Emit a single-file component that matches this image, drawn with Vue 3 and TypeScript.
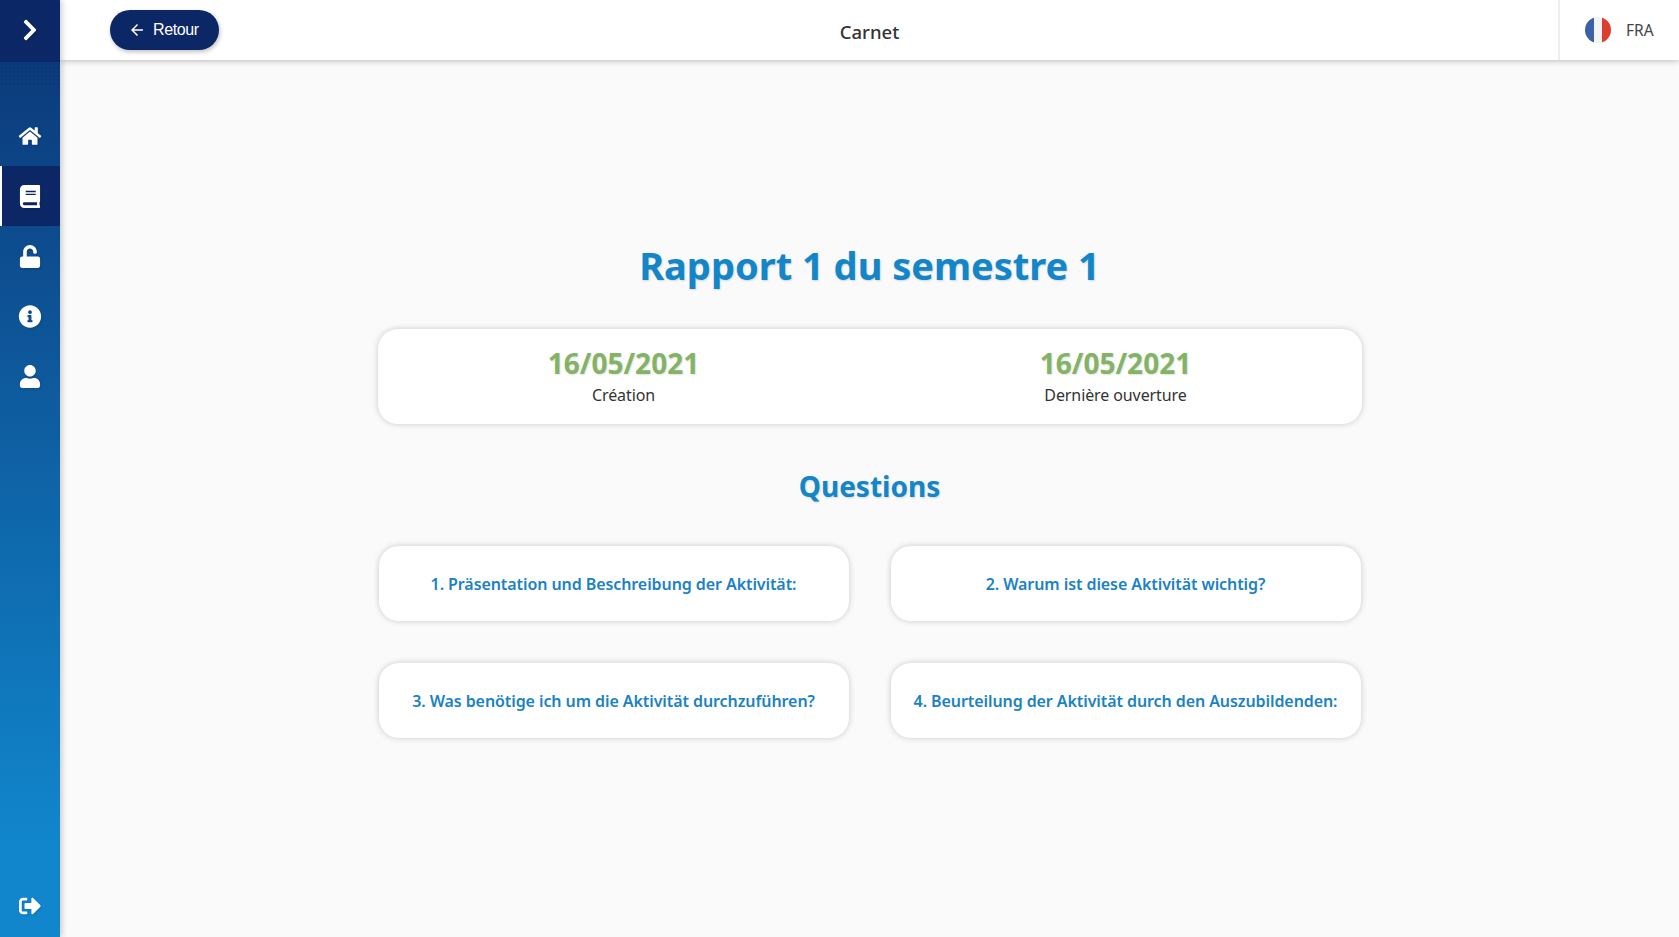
<template>
  <div class="app">
    <aside class="sidebar">
      <div class="toggle">
        <svg class="icon chevron" viewBox="0 0 320 512"><path :d="icons.chevron" /></svg>
      </div>
      <div class="dots"></div>
      <nav class="nav">
        <a v-for="item in navItems" :key="item.name" class="nav-item" :class="{ active: item.active }">
          <svg class="icon" :class="item.name" :viewBox="item.box"><path :d="item.path" /></svg>
        </a>
      </nav>
      <a class="nav-item logout">
        <svg class="icon" viewBox="0 0 512 512"><path :d="icons.logout" /></svg>
      </a>
    </aside>

    <div class="content">
      <header class="topbar">
        <div class="topbar-left">
          <button class="back">
            <svg class="back-arrow" viewBox="0 0 24 24"><path d="M20 11H7.8l5.6-5.6L12 4l-8 8 8 8 1.4-1.4L7.8 13H20z" /></svg>
            Retour
          </button>
        </div>
        <div class="topbar-title">Carnet</div>
        <div class="lang">
          <svg class="flag" viewBox="0 0 26 26">
            <defs><clipPath id="flag-clip"><circle cx="13" cy="13" r="13" /></clipPath></defs>
            <g clip-path="url(#flag-clip)">
              <rect width="9" height="26" fill="#3c5fa8" />
              <rect x="9" width="8" height="26" fill="#f1f3f5" />
              <rect x="17" width="9" height="26" fill="#dc3d2c" />
            </g>
          </svg>
          <span>FRA</span>
        </div>
      </header>

      <main class="main">
        <h1 class="title">Rapport 1 du semestre 1</h1>
        <section class="dates">
          <div v-for="d in dates" :key="d.label" class="date">
            <div class="date-value">{{ d.value }}</div>
            <div class="date-label">{{ d.label }}</div>
          </div>
        </section>
        <h2 class="subtitle">Questions</h2>
        <section class="questions">
          <div v-for="q in questions" :key="q" class="question">{{ q }}</div>
        </section>
      </main>
    </div>
  </div>
</template>

<script setup lang="ts">
const icons = {
  chevron:
    "M285.476 272.971L91.132 467.314c-9.373 9.373-24.569 9.373-33.941 0l-22.667-22.667c-9.357-9.357-9.375-24.522-.04-33.901L188.505 256 34.484 101.255c-9.335-9.379-9.317-24.544.04-33.901l22.667-22.667c9.373-9.373 24.569-9.373 33.941 0L285.475 239.03c9.373 9.372 9.373 24.568.001 33.941z",
  home:
    "M280.37 148.26L96 300.11V464a16 16 0 0 0 16 16l112.06-.29a16 16 0 0 0 15.92-16V368a16 16 0 0 1 16-16h64a16 16 0 0 1 16 16v95.64a16 16 0 0 0 16 16.05L464 480a16 16 0 0 0 16-16V300L295.67 148.26a12.19 12.19 0 0 0-15.3 0zM571.6 251.47L488 182.56V44.05a12 12 0 0 0-12-12h-56a12 12 0 0 0-12 12v72.61L318.47 43a48 48 0 0 0-61 0L4.34 251.47a12 12 0 0 0-1.6 16.9l25.5 31A12 12 0 0 0 45.15 301l235.22-193.74a12.19 12.19 0 0 1 15.3 0L530.9 301a12 12 0 0 0 16.9-1.6l25.5-31a12 12 0 0 0-1.7-16.93z",
  book:
    "M448 360V24c0-13.3-10.7-24-24-24H96C43 0 0 43 0 96v320c0 53 43 96 96 96h328c13.3 0 24-10.7 24-24v-16c0-7.5-3.5-14.3-8.9-18.7-4.2-15.4-4.2-59.3 0-74.7 5.4-4.3 8.9-11.1 8.9-18.6zM128 134c0-3.3 2.7-6 6-6h212c3.3 0 6 2.7 6 6v20c0 3.3-2.7 6-6 6H134c-3.3 0-6-2.7-6-6v-20zm0 64c0-3.3 2.7-6 6-6h212c3.3 0 6 2.7 6 6v20c0 3.3-2.7 6-6 6H134c-3.3 0-6-2.7-6-6v-20zm253.4 250H96c-17.7 0-32-14.3-32-32 0-17.6 14.4-32 32-32h285.4c-1.9 17.1-1.9 46.9 0 64z",
  unlock:
    "M400 256H152V152.9c0-39.6 31.7-72.5 71.3-72.9 40-.4 72.7 32.1 72.7 72v16c0 13.3 10.7 24 24 24h32c13.3 0 24-10.7 24-24v-16C376 68 307.5-.3 223.5 0 139.5.3 72 69.5 72 153.5V256H48c-26.5 0-48 21.5-48 48v160c0 26.5 21.5 48 48 48h352c26.5 0 48-21.5 48-48V304c0-26.5-21.5-48-48-48z",
  info:
    "M256 8C119.043 8 8 119.083 8 256c0 136.997 111.043 248 248 248s248-111.003 248-248C504 119.083 392.957 8 256 8zm0 110c23.196 0 42 18.804 42 42s-18.804 42-42 42-42-18.804-42-42 18.804-42 42-42zm56 254c0 6.627-5.373 12-12 12h-88c-6.627 0-12-5.373-12-12v-24c0-6.627 5.373-12 12-12h12v-64h-12c-6.627 0-12-5.373-12-12v-24c0-6.627 5.373-12 12-12h64c6.627 0 12 5.373 12 12v100h12c6.627 0 12 5.373 12 12v24z",
  user:
    "M224 256c70.7 0 128-57.3 128-128S294.7 0 224 0 96 57.3 96 128s57.3 128 128 128zm89.6 32h-16.7c-22.2 10.2-46.9 16-72.9 16s-50.6-5.8-72.9-16h-16.7C60.2 288 0 348.2 0 422.4V464c0 26.5 21.5 48 48 48h352c26.5 0 48-21.5 48-48v-41.6c0-74.2-60.2-134.4-134.4-134.4z",
  logout:
    "M497 273L329 441c-15 15-41 4.5-41-17v-96H152c-13.3 0-24-10.7-24-24v-96c0-13.3 10.7-24 24-24h136V88c0-21.4 25.9-32 41-17l168 168c9.3 9.4 9.3 24.6 0 34zM192 436v-40c0-6.6-5.4-12-12-12H96c-17.7 0-32-14.3-32-32V160c0-17.7 14.3-32 32-32h84c6.6 0 12-5.4 12-12V76c0-6.6-5.4-12-12-12H96c-53 0-96 43-96 96v192c0 53 43 96 96 96h84c6.6 0 12-5.4 12-12z"
};

const navItems = [
  { name: "home", box: "0 0 576 512", path: icons.home, active: false },
  { name: "book", box: "0 0 448 512", path: icons.book, active: true },
  { name: "unlock", box: "0 0 448 512", path: icons.unlock, active: false },
  { name: "info", box: "0 0 512 512", path: icons.info, active: false },
  { name: "user", box: "0 0 448 512", path: icons.user, active: false }
];

const dates = [
  { value: "16/05/2021", label: "Création" },
  { value: "16/05/2021", label: "Dernière ouverture" }
];

const questions = [
  "1. Präsentation und Beschreibung der Aktivität:",
  "2. Warum ist diese Aktivität wichtig?",
  "3. Was benötige ich um die Aktivität durchzuführen?",
  "4. Beurteilung der Aktivität durch den Auszubildenden:"
];
</script>

<style>
html,
body {
  margin: 0;
  background: #fafafa;
}
</style>

<style scoped>
.app {
  display: flex;
  height: 937px;
  overflow: hidden;
  font-family: "Noto Sans", "Open Sans", sans-serif;
  color: #333;
}

.sidebar {
  position: relative;
  z-index: 2;
  display: flex;
  flex-direction: column;
  flex: 0 0 60px;
  width: 60px;
  background: linear-gradient(180deg, #0b3575 0%, #1186cc 90%, #1186cc 100%);
  box-shadow: 2px 0 6px rgba(0, 0, 0, 0.2);
}

.toggle {
  display: flex;
  align-items: center;
  justify-content: center;
  height: 62px;
  background: #0c2766;
}

.dots {
  height: 24px;
  background-image: radial-gradient(rgba(12, 39, 102, 0.35) 0.7px, transparent 0.9px);
  background-size: 4px 4px;
}

.nav {
  display: flex;
  flex-direction: column;
  padding-top: 20px;
}

.nav-item {
  display: flex;
  align-items: center;
  justify-content: center;
  height: 60px;
}

.nav-item.active {
  background: #0c2766;
  box-shadow: inset 2px 0 0 #fff;
}

.logout {
  margin-top: auto;
  height: 62px;
}

.icon {
  width: 24px;
  height: 22px;
  fill: #fff;
  filter: drop-shadow(1px 1px 1px rgba(0, 0, 0, 0.15));
}

.icon.home {
  height: 20px;
}

.icon.book,
.icon.unlock,
.icon.info,
.icon.user {
  height: 23px;
}

.chevron {
  height: 24px;
  margin-top: -2px;
}

.content {
  display: flex;
  flex-direction: column;
  flex: 1;
  min-width: 0;
}

.topbar {
  position: relative;
  z-index: 1;
  display: grid;
  grid-template-columns: 1fr auto 1fr;
  align-items: center;
  height: 60px;
  background: #fff;
  box-shadow: 0 1px 6px rgba(0, 0, 0, 0.25);
}

.topbar-left {
  padding-left: 50px;
}

.back {
  display: flex;
  align-items: center;
  gap: 7px;
  height: 40px;
  width: 109px;
  margin-top: -1px;
  padding: 0 0 0 18px;
  border: none;
  border-radius: 20px;
  background: #0c2766;
  color: #fff;
  font-family: "Liberation Sans", sans-serif;
  font-size: 16px;
  letter-spacing: -0.4px;
  box-shadow: 1px 2px 4px rgba(0, 0, 0, 0.25);
}

.back-arrow {
  width: 18px;
  height: 18px;
  fill: #fff;
}

.topbar-title {
  margin-top: 2px;
  font-size: 18.5px;
  font-weight: 500;
  color: #333;
}

.lang {
  justify-self: end;
  display: flex;
  align-items: center;
  gap: 15px;
  width: 121px;
  height: 60px;
  padding-left: 25px;
  box-sizing: border-box;
  border-left: 2px solid #eee;
  font-size: 15.5px;
  color: #444;
}

.flag {
  width: 26px;
  height: 26px;
}

.main {
  display: flex;
  flex-direction: column;
  align-items: center;
  flex: 1;
  padding-top: 178px;
}

.title {
  margin: 0;
  font-size: 38px;
  line-height: 54px;
  font-weight: 700;
  color: #1286c9;
  text-shadow: 1px 1px 2px rgba(0, 0, 0, 0.15);
}

.dates {
  display: grid;
  grid-template-columns: 1fr 1fr;
  width: 984px;
  height: 95px;
  margin-top: 37px;
  padding-top: 17px;
  box-sizing: border-box;
  background: #fff;
  border-radius: 20px;
  box-shadow: 0 0 6px rgba(0, 0, 0, 0.2);
}

.date {
  text-align: center;
}

.date-value {
  font-size: 28px;
  line-height: 34px;
  font-weight: 700;
  color: #82b366;
  text-shadow: 1px 1px 2px rgba(0, 0, 0, 0.12);
}

.date-label {
  margin-top: 4px;
  font-size: 16px;
  line-height: 22px;
  letter-spacing: -0.1px;
  color: #333;
}

.subtitle {
  margin: 42px 0 0;
  font-size: 28px;
  line-height: 40px;
  font-weight: 700;
  color: #1286c9;
  text-shadow: 1px 1px 2px rgba(0, 0, 0, 0.15);
}

.questions {
  display: grid;
  grid-template-columns: 470px 470px;
  gap: 42px 42px;
  margin-top: 40px;
}

.question {
  display: flex;
  align-items: center;
  justify-content: center;
  height: 75px;
  background: #fff;
  border-radius: 20px;
  box-shadow: 0 0 6px rgba(0, 0, 0, 0.2);
  font-size: 16px;
  font-weight: 600;
  letter-spacing: -0.08px;
  color: #1a82c4;
  white-space: nowrap;
}
</style>
